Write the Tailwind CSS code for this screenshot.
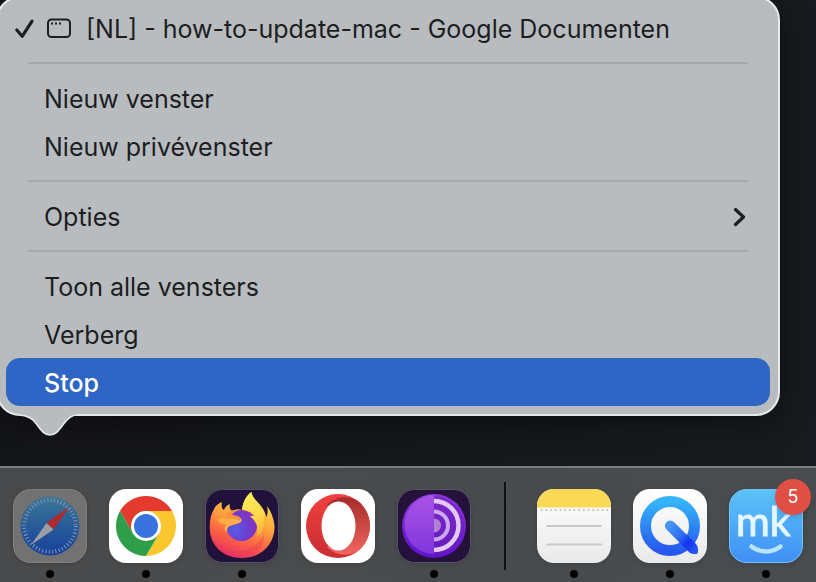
<!DOCTYPE html>
<html lang="nl">
<head>
    <meta charset="UTF-8">
    <meta name="viewport" content="width=device-width, initial-scale=1.0">
    <title>Dock</title>
    <script src="https://cdn.jsdelivr.net/npm/@tailwindcss/browser@4"></script>
</head>
<body class="overflow-hidden bg-[#15171a] font-['Inter',sans-serif]">
    <main class="flex min-h-screen flex-col bg-linear-to-r from-[#141517] to-[#161b1f]">

        <!-- Context menu -->
        <nav aria-label="Safari" class="relative -mt-1 mr-9 -ml-1 rounded-3xl border-2 border-[#e6e8e9] bg-[#b9bcbf] px-2 pt-1.5 pb-2 text-[25px] text-[#1c1e1f] shadow-[0_6px_30px_rgba(0,0,0,0.45)]">
            <button class="flex h-12 w-full items-center pt-1 pl-2 text-left">
                <svg class="h-6 w-6 shrink-0" viewBox="0 0 24 24" fill="none" stroke="currentColor" stroke-width="3.2" stroke-linecap="round" stroke-linejoin="round">
                    <path d="M2.800 12 L8.200 18.300 L18 3.200"/>
                </svg>
                <svg class="ml-2 h-6 w-7 shrink-0" viewBox="0 0 28 24" fill="none" stroke="currentColor">
                    <rect x="2" y="1.500" width="22" height="17.500" rx="3.500" stroke-width="2"/>
                    <path d="M5 5.500h2M9 5.500h2M13 5.500h2" stroke-width="2"/>
                </svg>
                <span class="ml-3 whitespace-nowrap">[NL] - how-to-update-mac - Google Documenten</span>
            </button>
            <hr class="mx-[22px] my-2.5 border-t-2 border-[#a5a8ab]">
            <button class="flex h-12 w-full items-center pt-1 pl-[38px] text-left">Nieuw venster</button>
            <button class="flex h-12 w-full items-center pt-1 pl-[38px] text-left">Nieuw privévenster</button>
            <hr class="mx-[22px] my-2.5 border-t-2 border-[#a5a8ab]">
            <button class="flex h-12 w-full items-center justify-between pt-1 pr-6 pl-[38px] text-left">
                Opties
                <svg class="h-5 w-3.5" viewBox="0 0 14 20" fill="none" stroke="currentColor" stroke-width="3.2" stroke-linecap="round" stroke-linejoin="round">
                    <path d="M3.500 1.500 L11.500 9 L3.500 16.500"/>
                </svg>
            </button>
            <hr class="mx-[22px] my-2.5 border-t-2 border-[#a5a8ab]">
            <button class="flex h-12 w-full items-center pt-1 pl-[38px] text-left">Toon alle vensters</button>
            <button class="flex h-12 w-full items-center pt-1 pl-[38px] text-left">Verberg</button>
            <button class="flex h-12 w-full items-center rounded-[14px] bg-[#2f66c5] pt-1 pl-[38px] text-left font-medium text-white">Stop</button>

            <!-- Pointer towards the dock icon -->
            <svg class="absolute top-full left-4 -mt-1 h-[27px] w-[66px]" viewBox="0 0 66 27" fill="none">
                <path d="M5 3 V5 C13 6 16 7 20 11 C26 18 29 25 36 25 C43 25 46 18 52 11 C56 7 58 5 64 5 V3Z" fill="#b9bcbf"/>
                <path d="M5 5 C13 6 16 7 20 11 C26 18 29 25 36 25 C43 25 46 18 52 11 C56 7 58 5 64 5" stroke="#e6e8e9" stroke-width="1.700"/>
            </svg>
        </nav>

        <!-- Dock -->
        <ul class="mt-auto flex border-t-2 border-[#7b7e80] bg-linear-to-r from-[#494a4b] to-[#484c4f] pt-[21px] pb-1 pl-0.5">
            <li class="flex w-24 shrink-0 flex-col items-center gap-[7px]">
                <button aria-label="Safari" class="size-[74px]">
                    <svg class="size-full overflow-visible drop-shadow-sm" viewBox="0 0 74 74">
                        <defs>
                            <linearGradient id="safari" x2="0" y2="1">
                                <stop offset="0" stop-color="#3b7796"/>
                                <stop offset="1" stop-color="#163f9c"/>
                            </linearGradient>
                        </defs>
                        <rect x=".5" y=".5" width="73" height="73" rx="17" fill="#727272" stroke="#808080"/>
                        <circle cx="37" cy="37" r="29.5" fill="url(#safari)"/>
                        <circle cx="37" cy="37" r="25.8" fill="none" stroke="#8298ac" stroke-width="4" stroke-dasharray="1 2.377"/>
                        <path d="M57 17 L33.5 34 L40.5 40.5Z" fill="#b02b2d"/>
                        <path d="M18 56 L33.5 34 L40.5 40.5Z" fill="#9c9ea3"/>
                    </svg>
                </button>
                <span class="size-2 rounded-full bg-black"></span>
            </li>
            <li class="flex w-24 shrink-0 flex-col items-center gap-[7px]">
                <button aria-label="Google Chrome" class="size-[74px]">
                    <svg class="size-full overflow-visible drop-shadow-sm" viewBox="0 0 74 74">
                        <rect width="74" height="74" rx="17" fill="#fff"/>
                        <path d="M11 22 A30 30 0 0 1 63 22 H37 L24 44.5Z" fill="#e33b2e"/>
                        <path d="M63 22 A30 30 0 0 1 37 67 L50 44.5 L37 22Z" fill="#fbc72f"/>
                        <path d="M37 67 A30 30 0 0 1 11 22 L24 44.5 H50Z" fill="#2f9e4b"/>
                        <circle cx="37" cy="37" r="15" fill="#fff"/>
                        <circle cx="37" cy="37" r="12" fill="#3873e0"/>
                    </svg>
                </button>
                <span class="size-2 rounded-full bg-black"></span>
            </li>
            <li class="flex w-24 shrink-0 flex-col items-center gap-[7px]">
                <button aria-label="Firefox" class="size-[74px]">
                    <svg class="size-full overflow-visible drop-shadow-sm" viewBox="0 0 74 74">
                        <defs>
                            <linearGradient id="fox" x1=".75" y1=".1" x2=".4" y2="1">
                                <stop offset="0" stop-color="#fde04b"/>
                                <stop offset=".4" stop-color="#fca43d"/>
                                <stop offset=".72" stop-color="#fb5f45"/>
                                <stop offset="1" stop-color="#ea3560"/>
                            </linearGradient>
                            <linearGradient id="flame" x1=".3" y1="0" x2=".6" y2="1">
                                <stop offset="0" stop-color="#fbec5c"/>
                                <stop offset=".6" stop-color="#fdd84a"/>
                                <stop offset="1" stop-color="#fbb03e"/>
                            </linearGradient>
                            <radialGradient id="globe" cx=".3" cy=".65" r=".75">
                                <stop offset="0" stop-color="#5a5ce8"/>
                                <stop offset=".55" stop-color="#6c3fd0"/>
                                <stop offset="1" stop-color="#8a2fbb"/>
                            </radialGradient>
                        </defs>
                        <rect x=".5" y=".5" width="73" height="73" rx="17" fill="#20123a" stroke="#56506a"/>
                        <path d="M5 42 C4 33 6 25 9 20 C11 16 14 14 17 13 C16 17 17 20 19 21 C20 18 22 16 25 15 C24 18 25 20 27 22 C31 20 34 20 37 21 C38 12 42 6 46.500 3 C47 9 54 13 58 20 C60 23 61 26 61 28 C63 25 63 21 62 17 C66 22 69 30 69.5 37 C70 56 55 69 37 69 C20 69 6 58 5 42Z" fill="url(#fox)"/>
                        <path d="M5.5 45 C14 61 30 66 43 60 C52 56 57 51 59 45 C60 58 49 69 37 69 C20 69 8 60 5.5 45Z" fill="#e22f5e" opacity=".3"/>
                        <circle cx="36.5" cy="36.500" r="15.500" fill="url(#globe)"/>
                        <path d="M37 21 C38 12 42 6 46.500 3 C47 10 54 13 58 21 C63 31 61 43 51 48 C54 42 53 33 45 27.500 C47 26.500 49 26.500 50.500 28 C48 23 43 21 37 21Z" fill="url(#flame)"/>
                        <path d="M60 27 C62 35 58 42 55 46" fill="none" stroke="#fb9b38" stroke-width="1.5" opacity=".6"/>
                        <path d="M13 31 C16 28 20 29 25 29 C29 29 33 31 37 31 C36 34 32 35 28 36 C23 37 22 39 22 43 C18 41 20 37 21 35 C18 35 14 34 13 31Z" fill="#fdae45"/>
                        <path d="M24 22.500 C21 25 20 27 21 29.500 C27 29 32 31 37 31 C36 27 31 27 27 25.500 C28 24 30 23 32 21.500 C29 21 26 21.500 24 22.500Z" fill="#fc943f"/>
                    </svg>
                </button>
                <span class="size-2 rounded-full bg-black"></span>
            </li>
            <li class="flex w-24 shrink-0 flex-col items-center gap-[7px]">
                <button aria-label="Opera" class="size-[74px]">
                    <svg class="size-full overflow-visible drop-shadow-sm" viewBox="0 0 74 74">
                        <defs>
                            <linearGradient id="operaLeft" x2="0" y2="1">
                                <stop offset="0" stop-color="#f0413f"/>
                                <stop offset="1" stop-color="#c92c31"/>
                            </linearGradient>
                            <linearGradient id="operaRight" x2="0" y2="1">
                                <stop offset="0" stop-color="#a52c29"/>
                                <stop offset="1" stop-color="#f36660"/>
                            </linearGradient>
                        </defs>
                        <rect width="74" height="74" rx="17" fill="#fff"/>
                        <circle cx="37" cy="37" r="32" fill="url(#operaLeft)"/>
                        <path d="M26 16 C33 8 46 6 56 11.300 A32 32 0 0 1 56 62.700 C46 68 33 66 26 58 L48 37Z" fill="url(#operaRight)"/>
                        <ellipse cx="37.500" cy="37" rx="17" ry="24.5" fill="#fff"/>
                    </svg>
                </button>
            </li>
            <li class="flex w-24 shrink-0 flex-col items-center gap-[7px]">
                <button aria-label="Tor Browser" class="size-[74px]">
                    <svg class="size-full overflow-visible drop-shadow-sm" viewBox="0 0 74 74">
                        <defs>
                            <linearGradient id="tor" x2="0" y2="1">
                                <stop offset="0" stop-color="#8c35dc"/>
                                <stop offset="1" stop-color="#6013cb"/>
                            </linearGradient>
                            <linearGradient id="torHalf" x2="0" y2="1">
                                <stop offset="0" stop-color="#a952e6"/>
                                <stop offset="1" stop-color="#8136dc"/>
                            </linearGradient>
                        </defs>
                        <rect x=".5" y=".5" width="73" height="73" rx="17" fill="#25123a" stroke="#5c5368"/>
                        <circle cx="37" cy="37" r="32" fill="url(#tor)"/>
                        <path d="M37 6 A29.500 29.500 0 0 0 37 65Z" fill="url(#torHalf)"/>
                        <path d="M37 7 A29.5 29.5 0 0 1 37 66Z" fill="#6a20ae" opacity=".45"/>
                        <path d="M37 29.5 A7 7 0 0 1 37 43.5Z" fill="#b082d4"/>
                        <path d="M37 22.5 A14 14 0 0 1 37 50.5" fill="none" stroke="#cda8ef" stroke-width="4"/>
                        <path d="M37 12 A24.5 24.5 0 0 1 37 61" fill="none" stroke="#e3c9f8" stroke-width="4.5"/>
                    </svg>
                </button>
                <span class="size-2 rounded-full bg-black"></span>
            </li>
            <li role="separator" class="-mt-[7px] mr-5 ml-[22px] w-0.5 shrink-0 self-start bg-[#0e1011] pt-[88px]"></li>
            <li class="flex w-24 shrink-0 flex-col items-center gap-[7px]">
                <button aria-label="Notities" class="size-[74px]">
                    <svg class="size-full overflow-visible drop-shadow-sm" viewBox="0 0 74 74">
                        <defs>
                            <linearGradient id="paper" x2="0" y2="1">
                                <stop offset="0" stop-color="#fff"/>
                                <stop offset="1" stop-color="#e9e9e9"/>
                            </linearGradient>
                        </defs>
                        <rect width="74" height="74" rx="17" fill="url(#paper)"/>
                        <path d="M0 18.5 V17 A17 17 0 0 1 17 0 H57 A17 17 0 0 1 74 17 V18.5Z" fill="#fad956"/>
                        <path d="M4.5 21 H72" stroke="#bdb9ad" stroke-width="1.8" stroke-linecap="round" stroke-dasharray="0.1 4.6"/>
                        <path d="M10 37 H64 M10 55.5 H64" stroke="#c8c8c8" stroke-width="2" stroke-linecap="round"/>
                    </svg>
                </button>
                <span class="size-2 rounded-full bg-black"></span>
            </li>
            <li class="flex w-24 shrink-0 flex-col items-center gap-[7px]">
                <button aria-label="QuickTime Player" class="size-[74px]">
                    <svg class="size-full overflow-visible drop-shadow-sm" viewBox="0 0 74 74">
                        <defs>
                            <linearGradient id="ring" x2="0" y2="1">
                                <stop offset="0" stop-color="#35b4fa"/>
                                <stop offset="1" stop-color="#2759ee"/>
                            </linearGradient>
                            <linearGradient id="handle" gradientUnits="userSpaceOnUse" x1="36" y1="36" x2="64" y2="64">
                                <stop offset="0" stop-color="#4698f5"/>
                                <stop offset=".4" stop-color="#2f6ff0"/>
                                <stop offset=".65" stop-color="#1434ee"/>
                                <stop offset="1" stop-color="#2b5cf2"/>
                            </linearGradient>
                        </defs>
                        <rect width="74" height="74" rx="17" fill="url(#paper)"/>
                        <circle cx="37" cy="37" r="24.5" fill="none" stroke="url(#ring)" stroke-width="11"/>
                        <path d="M33.5 40.5 A5.3 5.3 0 0 1 41 33 L63 55 Q65 57 65 60 V63 Q65 65 63 65 H60 Q57 65 55 62Z" fill="url(#handle)"/>
                    </svg>
                </button>
                <span class="size-2 rounded-full bg-black"></span>
            </li>
            <li class="flex w-24 shrink-0 flex-col items-center gap-[7px]">
                <button aria-label="MacKeeper, 5 meldingen" class="relative size-[74px]">
                    <svg class="size-full overflow-visible drop-shadow-sm" viewBox="0 0 74 74">
                        <defs>
                            <linearGradient id="mk" x2="0" y2="1">
                                <stop offset="0" stop-color="#5cc3f8"/>
                                <stop offset="1" stop-color="#3f8ff5"/>
                            </linearGradient>
                        </defs>
                        <rect x=".5" y=".5" width="73" height="73" rx="17" fill="url(#mk)" stroke="#70c4fa"/>
                        <text x="7" y="47" font-family="Lato, sans-serif" font-size="41" fill="#e4f7ff" stroke="#e4f7ff">mk</text>
                        <path d="M22.5 57.500 C31 64 43 64 51.5 57.500" fill="none" stroke="#b9e2fd" stroke-width="4.5" stroke-linecap="round"/>
                    </svg>
                    <span class="absolute -top-2.5 -right-2 flex size-9 items-center justify-center rounded-full bg-[#df4f43] text-lg text-white shadow-md">5</span>
                </button>
                <span class="size-2 rounded-full bg-black"></span>
            </li>
        </ul>
    </main>
</body>
</html>
